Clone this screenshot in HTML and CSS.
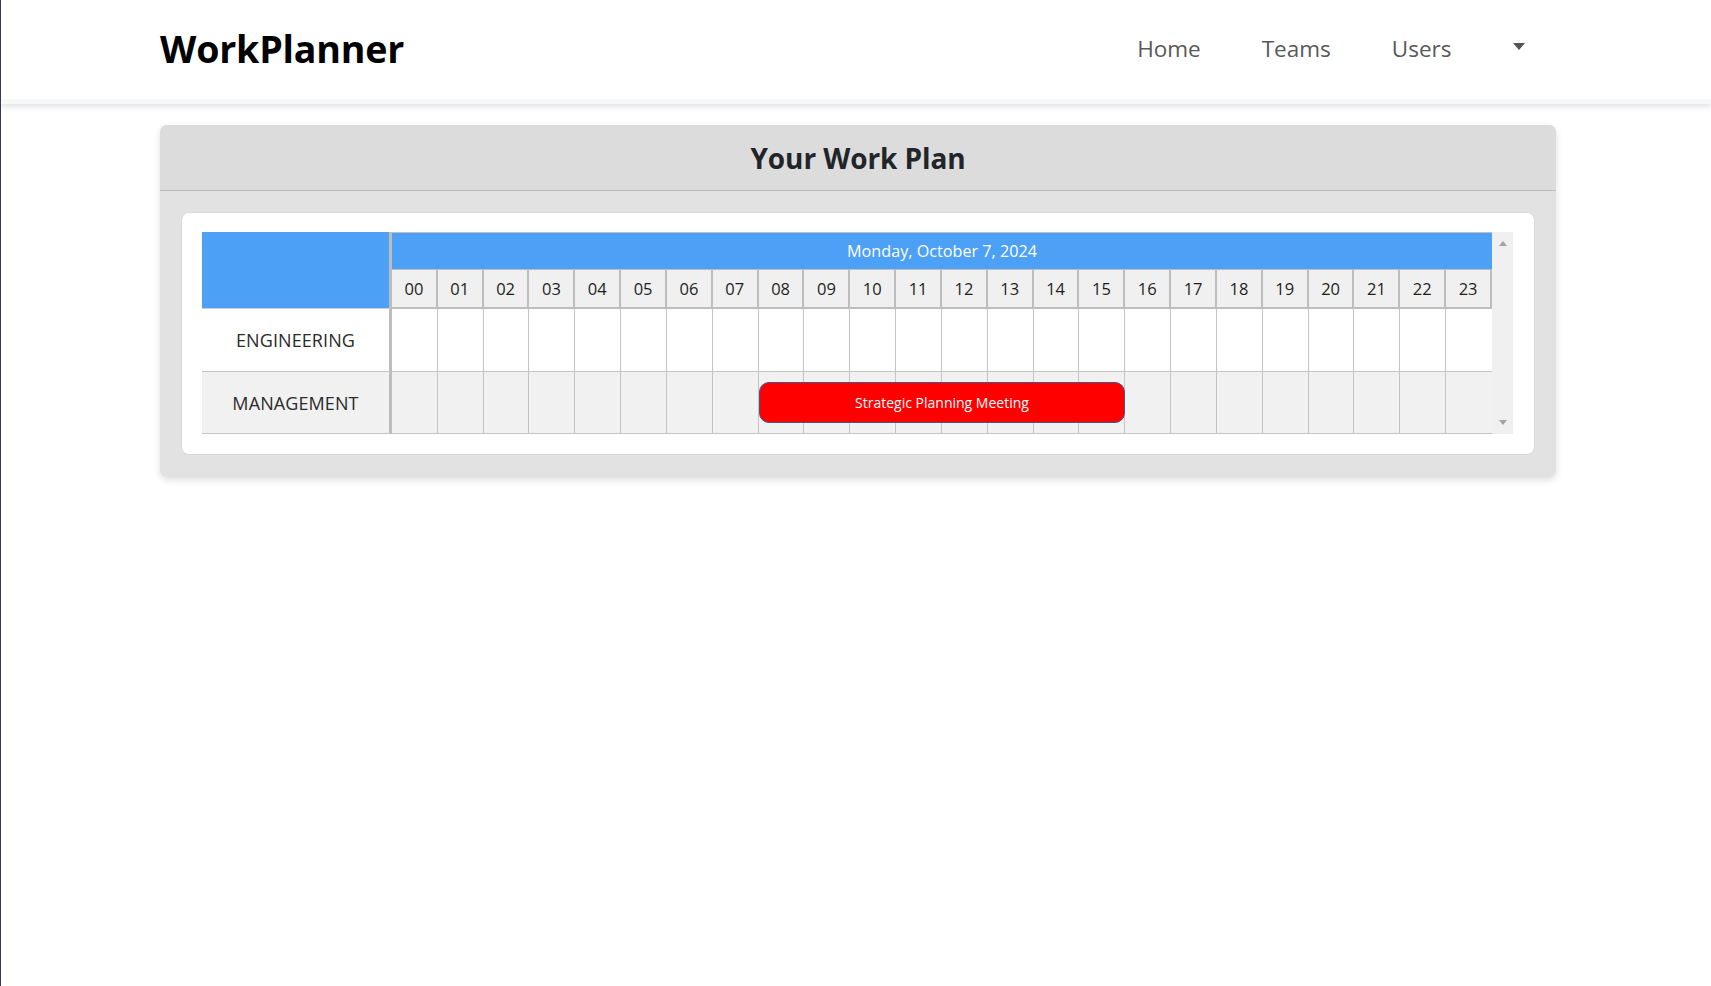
FILE: index.html
```html
<!DOCTYPE html>
<html lang="en">
<head>
<meta charset="utf-8">
<title>WorkPlanner</title>
<link rel="stylesheet" href="styles.css">
</head>
<body>
<header class="navbar">
  <div class="nav-inner">
    <a class="brand" href="#">WorkPlanner</a>
    <nav class="nav-links">
      <a class="nav-link" href="#">Home</a>
      <a class="nav-link" href="#">Teams</a>
      <a class="nav-link" href="#">Users</a>
      <a class="nav-link dropdown-toggle" href="#"><span class="caret"></span></a>
    </nav>
  </div>
</header>

<main class="container">
  <section class="card">
    <div class="card-header"><h1 class="card-title">Your Work Plan</h1></div>
    <div class="card-body">
      <div class="panel">
        <div class="scroller">
          <div class="timeline">
            <div class="thead">
              <div class="corner"></div>
              <div class="head-right">
                <div class="date">Monday, October 7, 2024</div>
                <div class="hours">
                  <div class="hour">00</div><div class="hour">01</div><div class="hour">02</div><div class="hour">03</div>
                  <div class="hour">04</div><div class="hour">05</div><div class="hour">06</div><div class="hour">07</div>
                  <div class="hour">08</div><div class="hour">09</div><div class="hour">10</div><div class="hour">11</div>
                  <div class="hour">12</div><div class="hour">13</div><div class="hour">14</div><div class="hour">15</div>
                  <div class="hour">16</div><div class="hour">17</div><div class="hour">18</div><div class="hour">19</div>
                  <div class="hour">20</div><div class="hour">21</div><div class="hour">22</div><div class="hour">23</div>
                </div>
              </div>
            </div>
            <div class="trow">
              <div class="label">ENGINEERING</div>
              <div class="slots">
                <div class="slot"></div><div class="slot"></div><div class="slot"></div><div class="slot"></div>
                <div class="slot"></div><div class="slot"></div><div class="slot"></div><div class="slot"></div>
                <div class="slot"></div><div class="slot"></div><div class="slot"></div><div class="slot"></div>
                <div class="slot"></div><div class="slot"></div><div class="slot"></div><div class="slot"></div>
                <div class="slot"></div><div class="slot"></div><div class="slot"></div><div class="slot"></div>
                <div class="slot"></div><div class="slot"></div><div class="slot"></div><div class="slot"></div>
              </div>
            </div>
            <div class="trow alt">
              <div class="label">MANAGEMENT</div>
              <div class="slots">
                <div class="slot"></div><div class="slot"></div><div class="slot"></div><div class="slot"></div>
                <div class="slot"></div><div class="slot"></div><div class="slot"></div><div class="slot"></div>
                <div class="slot"></div><div class="slot"></div><div class="slot"></div><div class="slot"></div>
                <div class="slot"></div><div class="slot"></div><div class="slot"></div><div class="slot"></div>
                <div class="slot"></div><div class="slot"></div><div class="slot"></div><div class="slot"></div>
                <div class="slot"></div><div class="slot"></div><div class="slot"></div><div class="slot"></div>
                <div class="events">
                  <div class="event" style="grid-column: 9 / 17;">Strategic Planning Meeting</div>
                </div>
              </div>
            </div>
          </div>
          <div class="scrollbar">
            <span class="arrow-up"></span>
            <span class="arrow-down"></span>
          </div>
        </div>
      </div>
    </div>
  </section>
</main>
</body>
</html>
```

FILE: styles.css
```css
* { box-sizing: border-box; }

html, body {
  margin: 0;
  padding: 0;
  background: #ffffff;
}

body {
  font-family: "Open Sans", "Noto Sans", "Liberation Sans", sans-serif;
  color: #212529;
  min-height: 986px;
  border-left: 1px solid #3a3550;
}

a { text-decoration: none; }

/* ---------- navbar ---------- */
.navbar {
  background: #ffffff;
  height: 104px;
  border-bottom: 5px solid #f7f8f9;
  box-shadow: 0 3px 5px rgba(0, 0, 0, 0.11);
}

.nav-inner {
  width: 1396px;
  margin-left: 159px;
  height: 99px;
  display: flex;
  align-items: center;
  justify-content: space-between;
}

.brand {
  font-size: 37.6px;
  font-weight: 700;
  color: #000000;
  letter-spacing: -0.2px;
  padding-bottom: 2px;
}

.nav-links {
  display: flex;
  align-items: center;
  padding-right: 1px;
}

.nav-link {
  font-size: 22.5px;
  color: #595959;
  padding: 0 30.5px;
  line-height: 1;
}

.dropdown-toggle {
  display: flex;
  align-items: center;
  height: 24px;
  padding-bottom: 6px;
}

.caret {
  display: block;
  width: 0;
  height: 0;
  border-left: 6.5px solid transparent;
  border-right: 6.5px solid transparent;
  border-top: 7px solid #555555;
}

/* ---------- card ---------- */
.container {
  width: 1396px;
  margin: 21px 0 0 159px;
}

.card {
  background: #e2e2e2;
  border-radius: 7px;
  box-shadow: 0 3px 7px rgba(0, 0, 0, 0.13);
  overflow: hidden;
}

.card-header {
  background: #dcdcdc;
  height: 66px;
  border-bottom: 1px solid #b9b9b9;
  display: flex;
  align-items: center;
  justify-content: center;
}

.card-title {
  margin: 0;
  font-size: 28px;
  font-weight: 700;
  color: #212529;
  letter-spacing: -0.1px;
}

.card-body {
  padding: 21px 21px 22px 21px;
}

.panel {
  background: #ffffff;
  border: 1px solid #d9d9d9;
  border-radius: 8px;
  padding: 19px 21px 20px 20px;
}

.scroller {
  display: flex;
  height: 202px;
}

/* ---------- timeline ---------- */
.timeline {
  width: 1290px;
  display: flex;
  flex-direction: column;
}

.thead {
  display: flex;
  height: 77px;
}

.corner {
  width: 190px;
  flex: none;
  background: #4ca0f5;
  border-right: 3px solid #bdbdbd;
  border-bottom: 1px solid #cfcfcf;
}

.head-right {
  flex: 1;
  display: flex;
  flex-direction: column;
}

.date {
  height: 37px;
  background: #4ca0f5;
  border-top: 1px solid #bdbdbd;
  color: #ffffff;
  font-size: 16.2px;
  display: flex;
  align-items: center;
  justify-content: center;
}

.hours {
  height: 40px;
  display: grid;
  grid-template-columns: repeat(24, 1fr);
}

.hour {
  background: #f0f0f0;
  border-top: 1px solid #bdbdbd;
  border-right: 2px solid #bdbdbd;
  border-bottom: 2px solid #bdbdbd;
  display: flex;
  align-items: center;
  justify-content: center;
  font-size: 16.5px;
  color: #1e1e1e;
}

.trow {
  display: flex;
  height: 63px;
  background: #ffffff;
}

.trow.alt {
  height: 62px;
  background: #f1f1f1;
}

.label {
  width: 190px;
  flex: none;
  border-right: 3px solid #bdbdbd;
  border-bottom: 1px solid #c4c4c4;
  display: flex;
  align-items: center;
  justify-content: center;
  font-size: 18px;
  color: #2b2b2b;
  letter-spacing: 0.1px;
}

.slots {
  flex: 1;
  position: relative;
  display: grid;
  grid-template-columns: repeat(24, 1fr);
}

.slot {
  border-right: 1px solid #c4c4c4;
  border-bottom: 1px solid #c4c4c4;
}

.slot:nth-child(24) { border-right: none; }

.events {
  position: absolute;
  inset: 0;
  display: grid;
  grid-template-columns: repeat(24, 1fr);
  align-items: center;
}

.event {
  grid-row: 1;
  height: 41px;
  margin-top: -1px;
  background: #ff0000;
  border: 1px solid #3d5a86;
  border-radius: 10px;
  color: #ffffff;
  font-size: 14px;
  display: flex;
  align-items: center;
  justify-content: center;
}

/* ---------- fake scrollbar ---------- */
.scrollbar {
  width: 21px;
  flex: none;
  background: #f0f0f0;
  display: flex;
  flex-direction: column;
  align-items: center;
  justify-content: space-between;
  padding: 9px 0 9px 0;
}

.arrow-up {
  width: 0;
  height: 0;
  border-left: 4.5px solid transparent;
  border-right: 4.5px solid transparent;
  border-bottom: 5px solid #a3a3a3;
}

.arrow-down {
  width: 0;
  height: 0;
  border-left: 4.5px solid transparent;
  border-right: 4.5px solid transparent;
  border-top: 5px solid #a3a3a3;
}
```
